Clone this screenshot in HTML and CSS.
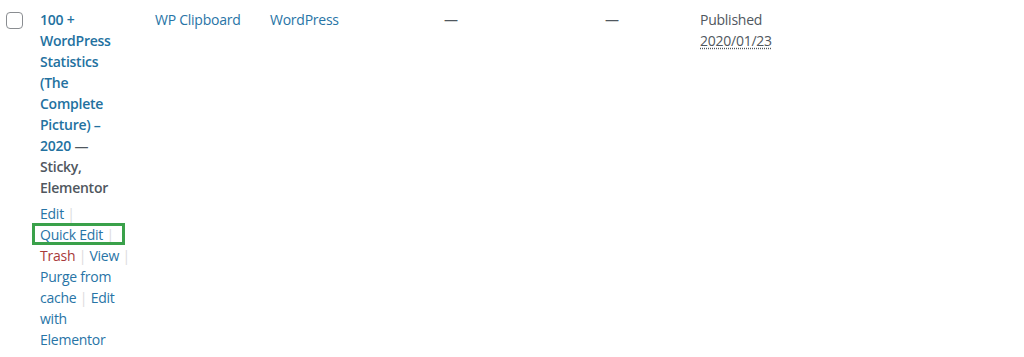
FILE: index.html
```html
<!DOCTYPE html>
<html>
<head>
<meta charset="utf-8">
<link rel="stylesheet" href="styles.css">
</head>
<body>
<div class="row">
  <div class="cell cb"><span class="checkbox"></span></div>
  <div class="cell title">
    <div class="post-title"><a class="row-title" href="#">100 + WordPress Statistics (The Complete Picture) – 2020</a> — <span class="state">Sticky, Elementor</span></div>
    <div class="row-actions">
      <span class="act"><a href="#">Edit</a>&nbsp;<span class="sep">|</span> </span>
      <span class="act highlight"><a href="#">Quick&nbsp;Edit</a>&nbsp;<span class="sep">|</span></span>
      <span class="act"><a href="#" class="trash">Trash</a>&nbsp;<span class="sep">|</span> </span>
      <span class="act"><a href="#">View</a>&nbsp;<span class="sep">|</span> </span>
      <span class="act"><a href="#">Purge from cache</a>&nbsp;<span class="sep">|</span> </span>
      <span class="act"><a href="#">Edit with Elementor</a></span>
    </div>
  </div>
  <div class="cell author"><a href="#">WP Clipboard</a></div>
  <div class="cell cats"><a href="#">WordPress</a></div>
  <div class="cell tags"><span class="dash">—</span></div>
  <div class="cell comments"><span class="dash">—</span></div>
  <div class="cell date">Published<br><abbr title="2020/01/23 10:00:00 am">2020/01/23</abbr></div>
</div>
</body>
</html>
```
FILE: styles.css
```css
html, body {
  margin: 0;
  padding: 0;
  background: #ffffff;
}
body {
  font-family: "Open Sans", "Noto Sans", sans-serif;
  font-size: 14px;
  line-height: 21px;
  letter-spacing: -0.25px;
  color: #50575e;
}
a {
  color: #2874a6;
  text-decoration: none;
}
.row {
  display: grid;
  grid-template-columns: 40px 105px 115px 174px 161px 95px 1fr;
  padding-top: 9px;
}
.cell {
  padding-left: 10px;
}
.cell.cb {
  padding-left: 6px;
  padding-top: 3px;
}
.cell.title {
  padding-left: 0;
  padding-right: 12px;
}
.checkbox {
  display: block;
  width: 15px;
  height: 15px;
  border: 1.5px solid #8a8d91;
  border-radius: 4px;
  background: #fff;
}
.post-title {
  max-width: 86px;
  font-weight: 600;
  color: #50575e;
}
.row-title {
  color: #23719f;
  font-weight: 600;
}
.state {
  color: #50575e;
}
.row-actions {
  padding-top: 5px;
}
.act {
  color: #a7aaad;
}
.sep {
  color: #dcdcde;
}
.trash {
  color: #a83a3a;
}
.highlight {
  position: relative;
}
.highlight::after {
  content: "";
  position: absolute;
  left: -8px;
  right: -11px;
  top: -2px;
  bottom: -1px;
  border: 3px solid #3aa14a;
  pointer-events: none;
}
.dash {
  color: #50575e;
}
.date {
  color: #50575e;
}
abbr {
  text-decoration: underline dotted;
  text-underline-offset: 2px;
}
```
